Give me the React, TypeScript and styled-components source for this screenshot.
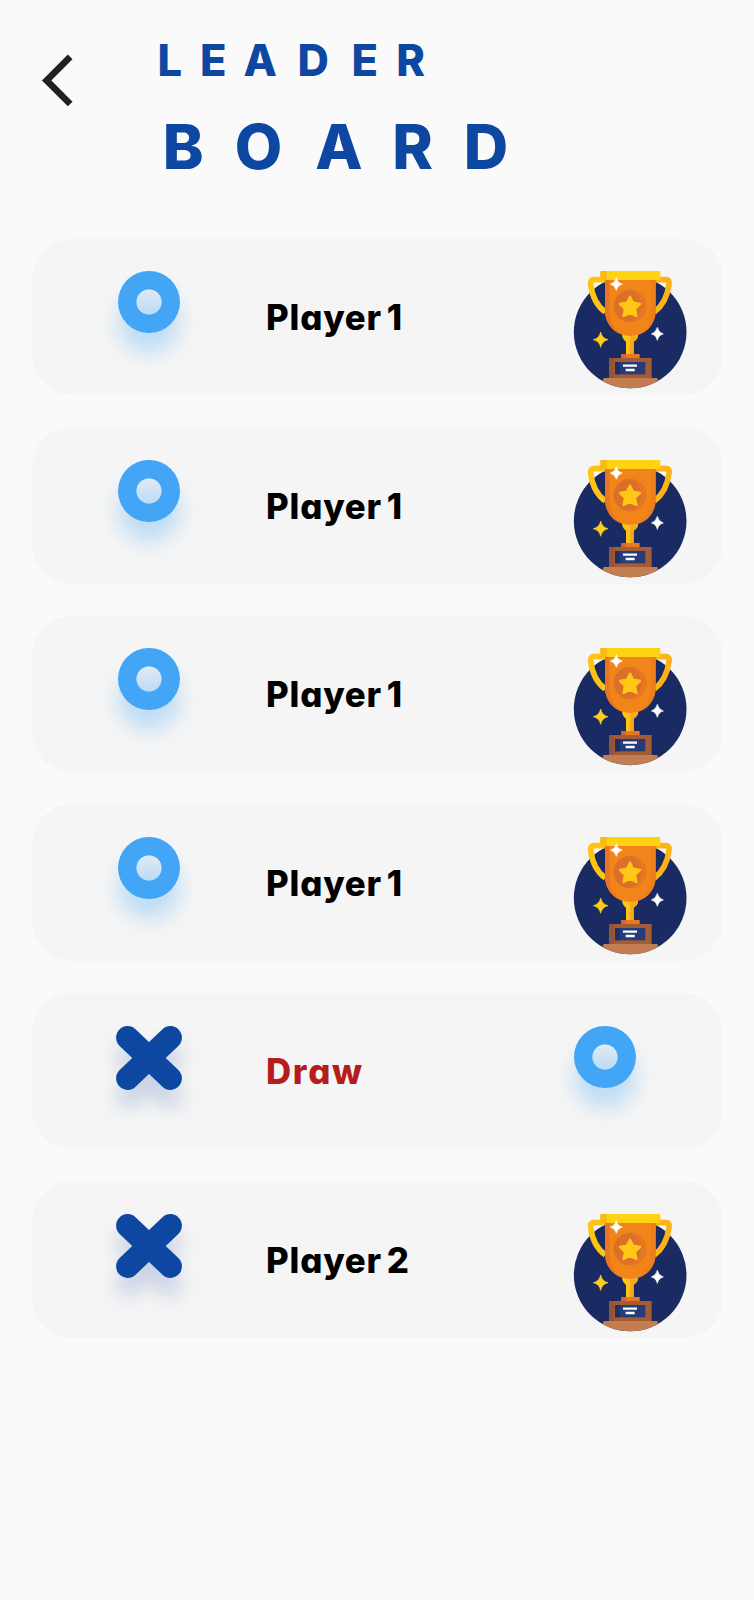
import React from "react";
import styled, { createGlobalStyle } from "styled-components";

const GlobalStyle = createGlobalStyle`
  * { box-sizing: border-box; }
  body {
    margin: 0;
    background: #fafafa;
    font-family: Inter, "Open Sans", sans-serif;
    font-feature-settings: "cv11" 1;
  }
`;

const Screen = styled.main`
  width: 754px;
  height: 1600px;
  overflow: hidden;
  background: #fafafa;
`;

const Header = styled.header`
  display: flex;
  align-items: flex-start;
  height: 238px;
  padding: 30px 0 0 32px;
`;

const BackButton = styled.button`
  width: 50px;
  height: 100px;
  padding: 0;
  border: 0;
  background: none;
`;

const Title = styled.h1`
  display: flex;
  flex-direction: column;
  margin: 0 0 0 74px;
  color: #0d47a1;
  font-weight: 800;
`;

const TitleLine = styled.span<{ $size: number; $height: number; $indent: number }>`
  display: flex;
  height: ${(p) => p.$height}px;
  line-height: ${(p) => p.$height}px;
  font-size: ${(p) => p.$size}px;
  padding-left: ${(p) => p.$indent}px;
`;

const Letter = styled.span<{ $advance: number }>`
  width: ${(p) => p.$advance}px;
  flex: none;
`;

const Results = styled.ul`
  display: flex;
  flex-direction: column;
  gap: 32px;
  margin: 0;
  padding: 0.5px 31px 0 32px;
  list-style: none;
`;

const ResultCard = styled.li`
  display: grid;
  grid-template-columns: 234px 296px 1fr;
  height: 156.5px;
  border-radius: 40px;
  background: #f5f5f5;
`;

const MarkCell = styled.div`
  padding: 32.5px 0 0 76px;
`;

const AwardCell = styled.div`
  padding-left: 11.3px;
  padding-top: 31.5px;
`;

const DrawCell = styled.div`
  padding: 33px 0 0 12px;
`;

const Name = styled.span<{ $draw?: boolean }>`
  padding-top: 56.5px;
  line-height: 44px;
  font-size: 34.8px;
  font-weight: 800;
  letter-spacing: ${(p) => (p.$draw ? "1.7px" : "0.8px")};
  word-spacing: -3.5px;
  white-space: nowrap;
  color: ${(p) => (p.$draw ? "#b71c1c" : "#000")};
`;

const Ring = styled.div`
  width: 62.4px;
  height: 62.4px;
  margin-left: 9.6px;
  border-radius: 50%;
  background: radial-gradient(circle, transparent 12.2px, #42a5f5 13px),
    linear-gradient(#dfeaf5 30%, #bcdaf5 72%);
  box-shadow: 0 20px 20px rgba(66, 165, 245, 0.3);
`;

const AwardRing = styled(Ring)`
  margin-left: 0;
`;

const Block = styled.svg`
  display: block;
  overflow: visible;
`;

const CrossSvg = styled(Block)`
  margin: 0.7px 0 0 7.6px;
  filter: drop-shadow(0 18px 10px rgba(13, 71, 161, 0.2));
`;

const Cross = () => (
  <CrossSvg width="66" height="64" viewBox="0 0 66 64">
    <path d="M11.6 11.6 L54.4 52.4 M54.4 11.6 L11.6 52.4" stroke="#0d47a1" strokeWidth="23" strokeLinecap="round" />
  </CrossSvg>
);

const Trophy = () => (
  <Block width="115" height="119.33" viewBox="40 45 345 358">
    <defs>
      <clipPath id="disc">
        <circle cx="211.5" cy="231" r="169" />
      </clipPath>
    </defs>
    <circle cx="211.5" cy="231" r="169" fill="#1a2a63" />
    <path d="M137 74 H103 Q92 74 93 86 Q99 143 137 171" fill="none" stroke="#ffc312" strokeWidth="17" />
    <path d="M287 74 H319 Q330 74 328 88 Q321 143 284 171" fill="none" stroke="#fdb315" strokeWidth="17" />
    <path d="M187 235 H235 Q237 252 222 260 V300 H199 V260 Q187 254 187 235Z" fill="#ffc416" />
    <path d="M212 244 H235 Q235 253 222 260 V300 H210Z" fill="#f5a91b" />
    <path d="M136 74 H288 V168 A76 75 0 0 1 136 168Z" fill="#f28519" />
    <path d="M136 74 H149 V168 Q150 222 193 241 A76 75 0 0 1 136 168Z" fill="#e87522" />
    <path d="M274 74 H288 V168 A76 75 0 0 1 231 241 Q273 214 274 168Z" fill="#ec7e1c" />
    <rect x="122" y="48" width="180" height="27" rx="3" fill="#ffd214" />
    <path d="M125 48 H141 V75 H122 V51 Q122 48 125 48Z" fill="#fbb915" />
    <circle cx="211" cy="153" r="49" fill="#dc7028" />
    <path d="M211 104 A49 49 0 0 1 211 202 Q245 186 245 153 Q245 119 211 104Z" fill="#e67725" />
    <path d="M211 125 L220 143 L241 147 L226 162 L230 183 L211 173 L192 183 L196 162 L181 147 L202 143Z" fill="#ffc817" stroke="#ffc817" strokeWidth="7" strokeLinejoin="round" />
    <path d="M185 297 H240 V311 H185Z" fill="#e97824" />
    <path d="M185 297 H198 V311 H185Z" fill="#cf682c" />
    <rect x="148" y="309" width="128" height="61" fill="#a45c35" />
    <path d="M148 309 H163 V370 H148Z" fill="#955338" />
    <rect x="166" y="321" width="91" height="37" fill="#263b78" />
    <path d="M166 321 H180 V358 H166Z" fill="#1d3066" />
    <path d="M190 332 H232 M198 345 H225" stroke="#fff" strokeWidth="7" />
    <path d="M132 369 H293 L300 402 H120Z" fill="#c27d50" clipPath="url(#disc)" />
    <path d="M170 68 Q173 84 188 87 Q173 91 170 106 Q166 91 152 87 Q166 84 170 68Z M293 217 Q297 233 311 237 Q297 240 293 256 Q289 240 275 237 Q289 233 293 217Z" fill="#fff" stroke="#fff" strokeWidth="2" />
    <path d="M123 231 Q127 250 145 254 Q127 258 123 277 Q119 258 101 254 Q119 250 123 231Z" fill="#ffce1d" stroke="#ffce1d" strokeWidth="2" />
  </Block>
);

type Result = { mark: "O" | "X"; name: string; draw?: boolean };

const results: Result[] = [
  { mark: "O", name: "Player 1" },
  { mark: "O", name: "Player 1" },
  { mark: "O", name: "Player 1" },
  { mark: "O", name: "Player 1" },
  { mark: "X", name: "Draw", draw: true },
  { mark: "X", name: "Player 2" },
];

const leader: [string, number][] = [["L", 42.4], ["E", 43.6], ["A", 53.9], ["D", 54.1], ["E", 44.7], ["R", 30]];
const board: [string, number][] = [["B", 72], ["O", 80.5], ["A", 77], ["R", 71.5], ["D", 46]];

export default function App() {
  return (
    <Screen>
      <GlobalStyle />
      <Header>
        <BackButton aria-label="Back">
          <Block width="50" height="100" viewBox="32 32 50 100">
            <path d="M70.2 58.8 L46.6 82.4 L70.2 106" fill="none" stroke="#212121" strokeWidth="6.6" />
          </Block>
        </BackButton>
        <Title>
          <TitleLine $size={43.4} $height={61} $indent={1.6}>
            {leader.map(([c, w], i) => <Letter key={i} $advance={w}>{c}</Letter>)}
          </TitleLine>
          <TitleLine $size={61.5} $height={111} $indent={6.8}>
            {board.map(([c, w], i) => <Letter key={i} $advance={w}>{c}</Letter>)}
          </TitleLine>
        </Title>
      </Header>
      <Results>
        {results.map((r, i) => (
          <ResultCard key={i}>
            <MarkCell>{r.mark === "O" ? <Ring /> : <Cross />}</MarkCell>
            <Name $draw={r.draw}>{r.name}</Name>
            {r.draw ? <DrawCell><AwardRing /></DrawCell> : <AwardCell><Trophy /></AwardCell>}
          </ResultCard>
        ))}
      </Results>
    </Screen>
  );
}
